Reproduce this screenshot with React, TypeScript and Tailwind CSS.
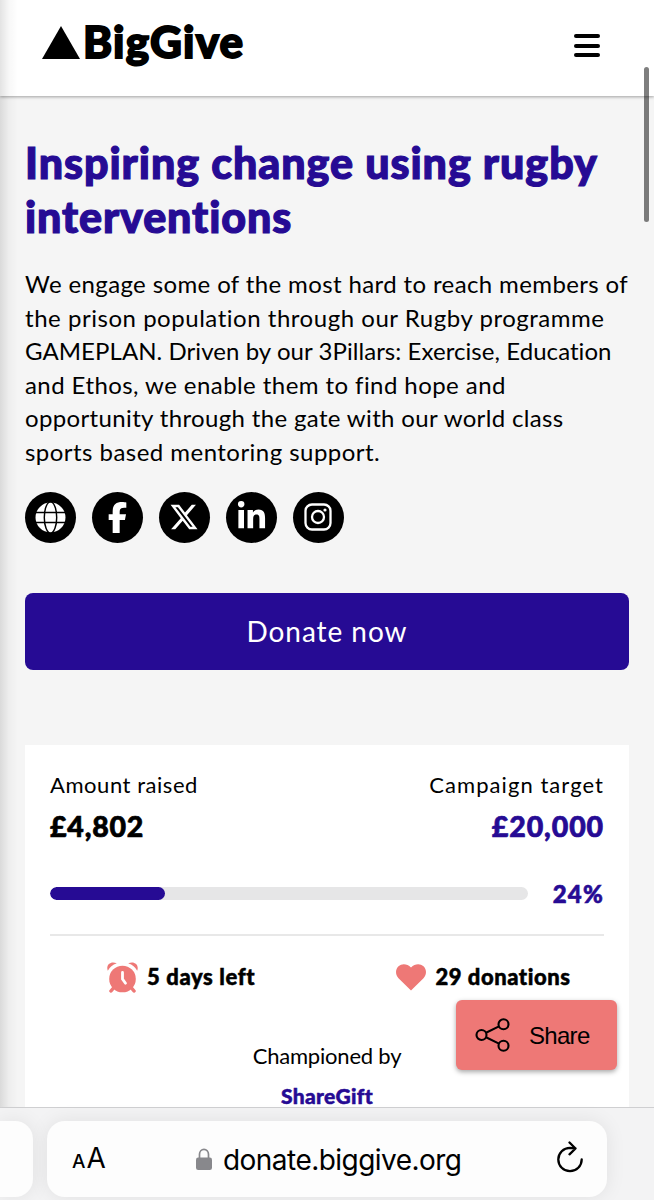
import type { ReactNode } from "react";
import { FaFacebookF, FaLinkedinIn, FaXTwitter } from "react-icons/fa6";

function SocialLink({ label, children }: { label: string; children: ReactNode }) {
  return (
    <a
      aria-label={label}
      className="flex size-[50.500px] items-center justify-center rounded-full bg-black text-white"
    >
      {children}
    </a>
  );
}

function Header() {
  return (
    <header className="relative z-10 flex h-24 shrink-0 items-center justify-between bg-white pr-[54px] pl-[42px] shadow-[0_1px_3px_rgba(0,0,0,0.35)]">
      <div className="flex h-[62px] -translate-y-[6px] items-center">
        <svg viewBox="0 0 38 33" className="h-[33px] w-[38px]">
          <path d="M19 0 38 33H0Z" fill="#000" />
        </svg>
        <span className="ml-[3px] -translate-y-px text-[44px] leading-none font-black tracking-[1.200px] [-webkit-text-stroke:1.8px_#000]">BigGive</span>
      </div>
      <button aria-label="Menu" className="mt-[-5px] flex flex-col gap-[5.4px]">
        <span className="h-1 w-[26px] rounded-full bg-black" />
        <span className="h-1 w-[26px] rounded-full bg-black" />
        <span className="h-1 w-[26px] rounded-full bg-black" />
      </button>
    </header>
  );
}

function Socials() {
  return (
    <div className="mt-[23.500px] flex gap-[16.500px]">
      <SocialLink label="Website">
        <svg viewBox="0 0 30 30" className="size-[31px]">
          <circle cx="15" cy="15" r="14.5" fill="#fff" />
          <g fill="none" stroke="#000" strokeWidth="1.4">
            <ellipse cx="15" cy="15" rx="6" ry="15.2" />
            <path d="M0 10.2h30M0 19.8h30" />
          </g>
        </svg>
      </SocialLink>
      <SocialLink label="Facebook">
        <FaFacebookF className="size-[31px]" />
      </SocialLink>
      <SocialLink label="X">
        <FaXTwitter className="size-[30px]" />
      </SocialLink>
      <SocialLink label="LinkedIn">
        <FaLinkedinIn className="size-[31px] -translate-y-px" />
      </SocialLink>
      <SocialLink label="Instagram">
        <svg viewBox="0 0 28 28" className="size-[28px]" fill="none" stroke="#fff" strokeWidth="2.3">
          <rect x="1.5" y="1.5" width="25" height="25" rx="6.5" />
          <circle cx="14" cy="14" r="6" />
          <circle cx="21" cy="7" r="1.6" fill="#fff" stroke="none" />
        </svg>
      </SocialLink>
    </div>
  );
}

function Campaign() {
  return (
    <section className="mt-[75px] h-[380px] bg-white px-[25px] pt-[24px]">
      <div className="flex justify-between text-[22px] leading-[32px]">
        <span className="tracking-[0.550px]">Amount raised</span>
        <span className="tracking-[1.050px]">Campaign target</span>
      </div>
      <div className="mt-[7px] flex justify-between text-[28.500px] leading-[36px] font-black [-webkit-text-stroke:0.7px]">
        <span className="tracking-[0.8px]">£4,802</span>
        <span className="tracking-[0.9px] text-[#260b94]">£20,000</span>
      </div>
      <div className="mt-[34px] flex h-[32px] items-center justify-between">
        <div className="h-[13px] w-[478px] overflow-hidden rounded-full bg-[#e6e6e7]">
          <div className="h-full w-[24%] rounded-full bg-[#260b94]" />
        </div>
        <span className="text-[24px] font-black tracking-[1.200px] text-[#260b94] [-webkit-text-stroke:0.6px]">24%</span>
      </div>
      <div className="mt-[24px] h-[2px] bg-[#e8e8e8]" />
      <div className="flex h-[84px] items-center justify-between pr-[33.500px] pl-[57px] text-[22px] font-black">
        <div className="flex items-center gap-[9px]">
          <svg viewBox="0 0 31 31" className="size-[31px]" fill="#ee7876">
            <circle cx="15.5" cy="17" r="13.3" />
            <path d="M.8 8.800C-1.500 2.500 4-1.500 9.800 1.300Q3.500 3.500.8 8.800ZM30.200 8.800C32.500 2.500 27-1.500 21.200 1.300Q27.500 3.500 30.200 8.800Z" />
            <path d="m6.5 26-2.500 3M24.5 26l2.500 3" stroke="#ee7876" strokeWidth="3.5" strokeLinecap="round" />
            <path d="M15.5 10.5V17l3 4.2" stroke="#fff" strokeWidth="2.8" fill="none" strokeLinecap="round" />
          </svg>
          <span className="-translate-y-px tracking-[0.620px] [-webkit-text-stroke:0.5px]">5 days left</span>
        </div>
        <div className="flex items-center gap-[9px]">
          <svg viewBox="0 0 30 27" className="h-[27px] w-[30px]" fill="#ee7876">
            <path d="M15 26.500 2.500 14.200C-.8 10.800-.8 5.300 2.500 2.300 6-.8 11.200-.3 15 3.500 18.800-.3 24-.8 27.500 2.300 30.800 5.300 30.800 10.800 27.500 14.200Z" />
          </svg>
          <span className="-translate-y-px tracking-[0.540px] [-webkit-text-stroke:0.5px]">29 donations</span>
        </div>
      </div>
      <div className="mt-[20px] text-center text-[22px] leading-[32px]">
        <p className="tracking-[-0.2px]">Championed by</p>
        <p className="mt-[8px] text-[21px] font-black tracking-[0.3px] text-[#260b94] [-webkit-text-stroke:0.5px]">ShareGift</p>
      </div>
    </section>
  );
}

function BrowserBar() {
  return (
    <footer className="relative z-30 flex h-[93px] shrink-0 gap-[14px] border-t border-[#cfcfd1] bg-[#f3f3f4] pt-[13px]">
      <div className="h-[76px] w-[33px] shrink-0 rounded-r-[18px] bg-[#fdfdfd] shadow-[0_0_20px_rgba(0,0,0,0.08)]" />
      <div className="relative flex h-[76px] w-[560px] items-center rounded-[18px] bg-[#fdfdfd] pr-[24px] pl-[25px] font-['Inter',sans-serif] shadow-[0_0_20px_rgba(0,0,0,0.08)]">
        <span className="w-[124px] translate-y-px text-[19px] leading-[36px] font-medium whitespace-nowrap">
          A<span className="ml-px text-[28px] font-normal">A</span>
        </span>
        <svg viewBox="0 0 16 22" className="h-[22px] w-[16px]">
          <path d="M3.500 11V6.300a4.500 5 0 0 1 9 0V11" fill="none" stroke="#88888c" strokeWidth="1.700" />
          <rect y="9.500" width="16" height="12.500" rx="2.200" fill="#88888c" />
        </svg>
        <span className="ml-[11px] translate-y-px text-[28px] tracking-[-0.540px]">donate.biggive.org</span>
        <svg viewBox="0 0 26 32" className="ml-auto h-[32px] w-[26px] -translate-y-0.5" fill="none" stroke="#000" strokeWidth="2.300" strokeLinecap="round" strokeLinejoin="round">
          <path d="M24.700 18.500A11.700 11.700 0 1 1 13 6.800L18.500 7.300M12.500 1.500l6 6-6 5.800" />
        </svg>
      </div>
    </footer>
  );
}

export default function App() {
  return (
    <div className="relative flex h-[1200px] w-[654px] flex-col overflow-hidden bg-[#f5f5f5] font-['Lato',sans-serif] text-black">
      <Header />
      <main className="min-h-0 flex-1 overflow-hidden px-[25px] pt-[40px]">
        <h1 className="text-[43px] leading-[54px] font-black whitespace-nowrap text-[#260b94] [-webkit-text-stroke:1.2px]">
          <span className="block tracking-[0.950px]">Inspiring change using rugby</span>
          <span className="block tracking-[0.900px]">interventions</span>
        </h1>
        <p className="mt-[23px] text-[24px] leading-[33.600px] whitespace-nowrap">
          <span className="block tracking-[0.380px]">We engage some of the most hard to reach members of</span>
          <span className="block tracking-[0.530px]">the prison population through our Rugby programme</span>
          <span className="block tracking-[0.060px]">GAMEPLAN. Driven by our 3Pillars: Exercise, Education</span>
          <span className="block tracking-[0.430px]">and Ethos, we enable them to find hope and</span>
          <span className="block tracking-[0.350px]">opportunity through the gate with our world class</span>
          <span className="block tracking-[0.460px]">sports based mentoring support.</span>
        </p>
        <Socials />
        <button className="mt-[50px] h-[77px] w-full rounded-[8px] bg-[#260b94] text-[28px] tracking-[0.950px] text-white">
          Donate now
        </button>
        <Campaign />
      </main>
      <BrowserBar />
      <button className="absolute top-[1000px] left-[456px] z-20 flex h-[70px] w-[161px] items-center rounded-[6px] bg-[#ee7876] pl-[19px] font-['Liberation_Sans',sans-serif] text-[24px] shadow-[0_2px_5px_rgba(0,0,0,0.35)]">
        <svg viewBox="0 0 36 34" className="h-[34px] w-[36px]" fill="none" stroke="#000" strokeWidth="2.100">
          <circle cx="6.500" cy="17" r="5" />
          <circle cx="28.500" cy="6.200" r="5" />
          <circle cx="28.500" cy="27.800" r="5" />
          <path d="m11 14.800 13-6.400M11 19.200l13 6.400" />
        </svg>
        <span className="ml-[18px] translate-y-px tracking-[-0.7px]">Share</span>
      </button>
      <div className="absolute top-0 left-0 z-20 h-[1107px] w-[18px] bg-linear-to-r from-black/11 via-black/3 to-transparent" />
      <div className="absolute top-[67px] right-[5px] z-20 h-[155px] w-[5px] rounded-full bg-black/50" />
    </div>
  );
}
